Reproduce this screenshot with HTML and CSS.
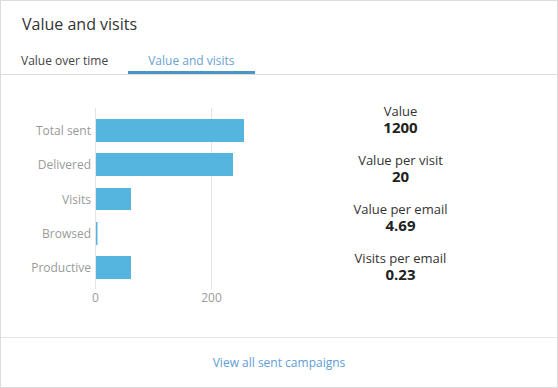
FILE: index.html
```html
<!DOCTYPE html>
<html>
<head>
<meta charset="utf-8">
<link rel="stylesheet" href="styles.css">
</head>
<body>
<div class="card">
  <div class="header">
    <h2 class="title">Value and visits</h2>
    <div class="tabs">
      <div class="tab">Value over time</div>
      <div class="tab active">Value and visits</div>
    </div>
  </div>
  <div class="body">
    <svg class="chart" width="243" height="262" viewBox="0 0 243 262">
      <line class="grid" x1="94.5" y1="33" x2="94.5" y2="214"/>
      <line class="grid" x1="210.5" y1="33" x2="210.5" y2="214"/>
      <rect class="bar" x="95" y="44" width="148" height="23"/>
      <rect class="bar" x="95" y="78" width="137" height="23"/>
      <rect class="bar" x="95" y="113" width="35" height="22"/>
      <rect class="bar" x="95" y="147" width="1.5" height="23"/>
      <rect class="bar" x="95" y="181" width="35" height="23"/>
      <text class="label" x="90" y="60">Total sent</text>
      <text class="label" x="90" y="94">Delivered</text>
      <text class="label" x="90" y="128.5">Visits</text>
      <text class="label" x="90" y="163">Browsed</text>
      <text class="label" x="90" y="197">Productive</text>
      <text class="tick" x="94.5" y="226.5">0</text>
      <text class="tick" x="210.5" y="226.5">200</text>
    </svg>
    <div class="stats">
      <div class="stat"><div class="stat-label">Value</div><div class="stat-value">1200</div></div>
      <div class="stat"><div class="stat-label">Value per visit</div><div class="stat-value">20</div></div>
      <div class="stat"><div class="stat-label">Value per email</div><div class="stat-value">4.69</div></div>
      <div class="stat"><div class="stat-label">Visits per email</div><div class="stat-value">0.23</div></div>
    </div>
  </div>
  <div class="footer">
    <a class="footer-link" href="#">View all sent campaigns</a>
  </div>
</div>
</body>
</html>
```

FILE: styles.css
```css
html, body {
  margin: 0;
  padding: 0;
  background: #fff;
}
body {
  font-family: "Open Sans", "DejaVu Sans", sans-serif;
  color: #333;
}
.card {
  box-sizing: border-box;
  width: 558px;
  height: 388px;
  border: 1px solid #dcdcdc;
  display: flex;
  flex-direction: column;
  background: #fff;
}
.header {
  padding-top: 12px;
  border-bottom: 1px solid #dcdcdc;
}
.title {
  margin: 0 0 18px 21px;
  font-size: 16px;
  font-weight: 400;
  line-height: 22px;
  color: #333;
}
.tabs {
  display: flex;
}
.tab {
  padding: 0 20px 2px;
  font-size: 12px;
  line-height: 16px;
  color: #444;
  border-bottom: 3px solid transparent;
}
.tab.active {
  color: #6a9fd4;
  border-bottom-color: #4a97c6;
}
.body {
  flex: 1;
  display: flex;
  min-height: 0;
}
.chart {
  flex: none;
  overflow: visible;
  display: block;
}
.grid {
  stroke: #e3e3e3;
  stroke-width: 1;
}
.bar {
  fill: #56b5df;
}
.label {
  font-family: "Open Sans", sans-serif;
  font-size: 12px;
  fill: #9a9a9a;
  text-anchor: end;
}
.tick {
  font-family: "Open Sans", sans-serif;
  font-size: 12px;
  fill: #9a9a9a;
  text-anchor: middle;
}
.stats {
  flex: 1;
  display: flex;
  flex-direction: column;
  align-items: center;
  gap: 16px;
  padding-top: 28px;
}
.stat {
  text-align: center;
}
.stat-label {
  font-size: 13px;
  line-height: 16px;
  color: #333;
}
.stat-value {
  font-size: 15px;
  line-height: 17px;
  font-weight: 700;
  color: #222;
}
.footer {
  height: 49px;
  border-top: 1px solid #e3e3e3;
  display: flex;
  align-items: center;
  justify-content: center;
}
.footer-link {
  font-size: 12px;
  line-height: 16px;
  color: #5e9ed6;
  text-decoration: none;
}
```
